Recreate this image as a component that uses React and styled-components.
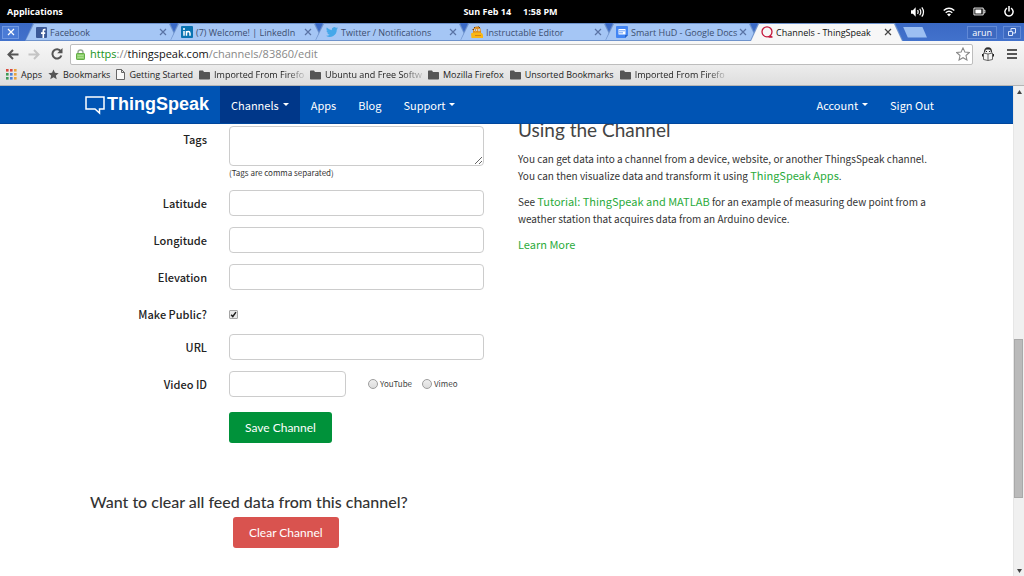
import React, { useState } from "react";
import styled, { createGlobalStyle } from "styled-components";

const Colors = {
    navBlue: "#0054b4",
    navActive: "#003789",
    link: "#2aab3b",
    save: "#00923a",
    danger: "#d9534f",
    strip: "#4272cc",
    tab: "#a5c6f5",
};

const uiFont = `"Open Sans", "Noto Sans", sans-serif`;
const siteFont = `"Noto Sans CJK SC", "Noto Sans", sans-serif`;
const titleFont = `Lato, sans-serif`;

const GlobalStyle = createGlobalStyle`
  * {
    box-sizing: border-box;
  }
  body {
    margin: 0;
    background: #fff;
    font-family: ${siteFont};
    color: #333;
  }
  button, input, textarea {
    font-family: inherit;
    margin: 0;
  }
  svg {
    display: block;
    flex: none;
  }
`;

const Screen = styled.div`
  display: flex;
  flex-direction: column;
  min-height: 100vh;
`;

/* desktop panel */

const Panel = styled.header`
  display: grid;
  grid-template-columns: 1fr auto 1fr;
  align-items: center;
  height: 23px;
  padding: 0 10px 0 7px;
  background: #000;
  color: #fff;
  font-family: ${uiFont};
  font-size: 9px;
  font-weight: 700;
`;

const PanelButton = styled.button`
  justify-self: start;
  padding: 0;
  border: none;
  background: none;
  color: inherit;
  font: inherit;
`;

const Clock = styled.div`
  display: flex;
  gap: 12px;
`;

const Indicators = styled.div`
  display: flex;
  align-items: center;
  justify-self: end;
  gap: 18px;
`;

/* browser */

const TabStrip = styled.div`
  display: flex;
  align-items: center;
  height: 18px;
  padding-right: 3px;
  background: linear-gradient(#3a69c4, ${Colors.strip});
  font-family: ${uiFont};
`;

const CloseWindow = styled.button`
  display: flex;
  align-items: center;
  justify-content: center;
  width: 17px;
  height: 13px;
  margin: 0 6px 0 2px;
  padding: 0;
  border: 1px solid #6f98e2;
  background: #4a7bd6;
  color: #fff;
`;

const Tab = styled.div`
  position: relative;
  z-index: ${props => (props.$active ? 2 : 1)};
  display: flex;
  align-items: center;
  flex: 0 1 153px;
  min-width: 0;
  height: 18px;
  padding: 0 11px;
  color: ${props => (props.$active ? "#111" : "#3c4e70")};
  font-size: 9px;
  & + & {
    margin-left: -8px;
  }
  &::before, &::after {
    content: "";
    position: absolute;
    z-index: -1;
    inset: 0;
    clip-path: polygon(8px 0, calc(100% - 8px) 0, 100% 100%, 0 100%);
    background: #6f93cc;
  }
  &::after {
    inset: 1px 1px ${props => (props.$active ? "0" : "1px")};
    background: ${props => (props.$active ? "#f7f7f7" : Colors.tab)};
  }
`;

const TabTitle = styled.a`
  flex: 1;
  margin-left: 3px;
  color: inherit;
  text-decoration: none;
  white-space: nowrap;
`;

const TabClose = styled.button`
  padding: 0;
  border: none;
  background: none;
  color: ${props => (props.$active ? "#444" : "#5a73a4")};
`;

const NewTab = styled.button`
  width: 24px;
  height: 11px;
  padding: 0;
  border: none;
  background: #9cbff2;
  clip-path: polygon(0 0, 80% 0, 100% 100%, 20% 100%);
`;

const WindowButton = styled.button`
  display: flex;
  align-items: center;
  justify-content: center;
  height: 13px;
  padding: 0 4px;
  border: 1px solid #6189d6;
  background: #3c69c0;
  color: #fff;
  font-size: 9px;
  line-height: 11px;
`;

const WindowButtons = styled.div`
  display: flex;
  gap: 6px;
  margin-left: auto;
`;

const Toolbar = styled.div`
  display: flex;
  align-items: center;
  height: 26px;
  padding-left: 6px;
  background: linear-gradient(#f7f7f7, #ebebeb);
`;

const IconButton = styled.button`
  display: flex;
  align-items: center;
  justify-content: center;
  width: ${props => props.$width || 22}px;
  padding: 0;
  border: none;
  background: none;
`;

const AddressBar = styled.div`
  display: flex;
  align-items: center;
  flex: 1;
  min-width: 0;
  height: 21px;
  margin: 0 3px 0 4px;
  padding: 0 2px 0 5px;
  border: 1px solid #bdbdbd;
  border-radius: 2px;
  background: #fff;
`;

const Address = styled.div`
  flex: 1;
  margin-left: 5px;
  color: #888;
  font-family: ${uiFont};
  font-size: 11px;
  line-height: 18px;
  white-space: nowrap;
`;

const Scheme = styled.span`
  color: #179317;
`;

const Host = styled.span`
  color: #111;
`;

const BookmarkBar = styled.nav`
  display: flex;
  align-items: center;
  gap: 6px;
  height: 19px;
  padding: 0 6px 3px;
  border-bottom: 1px solid #b5b5b5;
  background: linear-gradient(#ebebeb, #dedede);
  font-family: ${uiFont};
  font-size: 9px;
`;

const BookmarkLink = styled.a`
  display: flex;
  align-items: center;
  gap: 4px;
  color: #1c1c1c;
  line-height: 14px;
  text-decoration: none;
  white-space: nowrap;
`;

const BookmarkText = styled.span`
  ${props => props.$faded && "mask-image: linear-gradient(to right, #000 80%, rgba(0, 0, 0, 0.2));"}
`;

/* site */

const Viewport = styled.div`
  display: flex;
  flex: 1;
`;

const Site = styled.div`
  flex: 1;
  min-width: 0;
`;

const NavBar = styled.nav`
  position: relative;
  z-index: 3;
  background: ${Colors.navBlue};
  border-bottom: 1px solid #00469c;
`;

const Container = styled.div`
  max-width: 877px;
  margin: 0 auto;
`;

const NavInner = styled(Container)`
  display: flex;
  padding-left: 17px;
`;

const Brand = styled.a`
  display: flex;
  align-items: center;
  gap: 2px;
  width: 135px;
  color: #fff;
  font-family: "Liberation Sans", Arial, sans-serif;
  font-size: 18px;
  font-weight: 700;
  text-decoration: none;
`;

const NavLink = styled.a`
  display: flex;
  align-items: center;
  gap: 4px;
  height: 37px;
  padding: 0 11px;
  background: ${props => (props.$active ? Colors.navActive : "transparent")};
  color: #fff;
  font-size: 11px;
  text-decoration: none;
`;

const Caret = styled.span`
  border: 3px solid transparent;
  border-top-color: currentColor;
  border-bottom: none;
`;

const NavRight = styled.div`
  display: flex;
  margin-left: auto;
`;

/* the content is scrolled a little way under the nav bar */
const Content = styled(Container)`
  display: grid;
  grid-template-columns: 394px 1fr;
  gap: 34px;
  margin-top: -8px;
  padding: 0 12px 0 22px;
`;

const Form = styled.form`
  padding-top: 10px;
`;

const Row = styled.div`
  display: grid;
  grid-template-columns: 117px 1fr;
  column-gap: 22px;
  align-items: ${props => (props.$top ? "start" : "center")};
  margin-bottom: ${props => props.$space || 11}px;
`;

const RowLabel = styled.label`
  color: #222;
  font-size: 11px;
  font-weight: 500;
  line-height: 26px;
  text-align: right;
`;

const control = `
  display: block;
  width: 100%;
  border: 1px solid #ccc;
  border-radius: 4px;
  background: #fff;
  font-size: 11px;
`;

const TextBox = styled.input`
  ${control}
  height: 26px;
  padding: 0 10px;
`;

const TextArea = styled.textarea`
  ${control}
  height: 40px;
  padding: 5px 10px;
  resize: vertical;
`;

const Hint = styled.p`
  margin: 0;
  font-size: 8px;
  line-height: 13px;
`;

const CheckBox = styled.input`
  display: block;
  width: 9px;
  height: 9px;
  appearance: none;
  border: 1px solid #a5a5a5;
  border-radius: 1px;
  background: #e8e8e8;
  &:checked {
    background: #e8e8e8 url("data:image/svg+xml,%3Csvg xmlns='http://www.w3.org/2000/svg' viewBox='0 0 8 8'%3E%3Cpath d='M1.3 4.2 3.2 6.3 6.8 1.3' fill='none' stroke='%23222' stroke-width='1.7'/%3E%3C/svg%3E") center / 100%;
  }
`;

const VideoControls = styled.div`
  display: grid;
  grid-template-columns: 117px 1fr;
  column-gap: 22px;
  align-items: center;
`;

const RadioGroup = styled.div`
  display: flex;
  gap: 10px;
`;

const RadioLabel = styled.label`
  display: flex;
  align-items: center;
  gap: 2px;
  color: #444;
  font-size: 8px;
  line-height: 14px;
`;

const Radio = styled.input`
  width: 10px;
  height: 10px;
  appearance: none;
  border: 1px solid #9d9d9d;
  border-radius: 50%;
  background: linear-gradient(#eee, #dcdcdc);
  &:checked {
    background: radial-gradient(#444 35%, #e4e4e4 40%);
  }
`;

const ActionButton = styled.button`
  display: block;
  height: 31px;
  margin-left: ${props => props.$indent}px;
  padding: 0 16px;
  border: none;
  border-radius: 3px;
  background: ${props => props.$color};
  color: #fff;
  font-family: ${titleFont};
  font-size: 12px;
  cursor: pointer;
`;

const ClearTitle = styled.h3`
  margin: 47px 0 3px;
  font-family: ${titleFont};
  font-size: 16px;
  font-weight: 500;
  line-height: 24px;
  white-space: nowrap;
`;

const HelpTitle = styled.h2`
  margin: 0 0 6px;
  color: #444;
  font-family: ${titleFont};
  font-size: 19px;
  font-weight: 400;
  line-height: 28px;
`;

const HelpText = styled.p`
  margin: 0 0 9px;
  font-size: 10px;
  line-height: 17px;
`;

const HelpLink = styled.a`
  color: ${Colors.link};
  font-size: 11px;
  text-decoration: none;
`;

const ScrollTrack = styled.div`
  display: flex;
  flex-direction: column;
  align-items: center;
  width: 11px;
  padding: 4px 0 3px;
  border-left: 1px solid #e6e6e6;
  background: #f0f0f0;
`;

const ScrollThumb = styled.div`
  flex: 157;
  align-self: stretch;
  margin-right: 1px;
  border: 1px solid #a9a9a9;
  background: #bababa;
`;

const ScrollSpace = styled.div`
  flex: ${props => props.$size};
`;

function CloseIcon() {
    return (
        <svg width="8" height="8" viewBox="0 0 8 8" stroke="currentColor" strokeWidth="1.2">
            <path d="M1 1l6 6M7 1L1 7" />
        </svg>
    );
}

function FolderIcon() {
    return (
        <svg width="11" height="10" viewBox="0 0 11 10" fill="#555">
            <path d="M0 1.2Q0 .5.7.5H4l1 1.5h5.3q.7 0 .7.7v6q0 .8-.7.8H.7Q0 9.5 0 8.7z" />
        </svg>
    );
}

function AppsIcon() {
    const colors = ["#d9483b", "#d9483b", "#e8a33d", "#3f9b57", "#4a7fd6", "#e8a33d", "#3f9b57", "#4a7fd6", "#e8a33d"];
    return (
        <svg width="11" height="11" viewBox="0 0 11 11">
            {colors.map((color, i) => (
                <rect key={i} x={(i % 3) * 4} y={Math.floor(i / 3) * 4} width="2.6" height="2.6" fill={color} />
            ))}
        </svg>
    );
}

function StarIcon() {
    return (
        <svg width="11" height="11" viewBox="0 0 24 24" fill="#555">
            <path d="M12 1l3.2 7.4 8.1.7-6.1 5.3 1.8 7.9-7-4.2-7 4.2 1.8-7.9L.7 9.1l8.1-.7z" />
        </svg>
    );
}

function PageIcon() {
    return (
        <svg width="9" height="11" viewBox="0 0 9 11" fill="#f8f8f8" stroke="#666">
            <path d="M.5.5h5l3 3v7h-8zM5.5.5v3h3" />
        </svg>
    );
}

function FacebookIcon() {
    return (
        <svg width="11" height="11" viewBox="0 0 11 11">
            <rect width="11" height="11" rx="1" fill="#3b5998" />
            <path d="M9.5 2.6H8.4q-1.1 0-1.1 1.2V11M5 6.1h4.2" fill="none" stroke="#fff" strokeWidth="1.6" />
        </svg>
    );
}

function LinkedInIcon() {
    return (
        <svg width="12" height="12" viewBox="0 0 12 12">
            <rect width="12" height="12" rx="1" fill="#0a74b2" />
            <path d="M3 5v4.8M5.5 5v4.8M5.5 7.3q0-1.7 1.7-1.7T9 7.3v2.5" fill="none" stroke="#fff" strokeWidth="1.5" />
            <circle cx="3" cy="3" r="1" fill="#fff" />
        </svg>
    );
}

function TwitterIcon() {
    return (
        <svg width="12" height="12" viewBox="0 0 24 24" fill="#45a8ea">
            <path d="M24 4.6a10 10 0 0 1-2.8.8 5 5 0 0 0 2.1-2.7 10 10 0 0 1-3.1 1.2 4.9 4.9 0 0 0-8.4 4.5A14 14 0 0 1 1.7 3.2a4.9 4.9 0 0 0 1.5 6.5 5 5 0 0 1-2.2-.6 4.9 4.9 0 0 0 3.9 4.9 5 5 0 0 1-2.2.1 4.9 4.9 0 0 0 4.6 3.4A9.9 9.9 0 0 1 0 19.500a14 14 0 0 0 21.500-12.400A10 10 0 0 0 24 4.600z" />
        </svg>
    );
}

function RobotIcon() {
    return (
        <svg width="12" height="12" viewBox="0 0 12 12">
            <path d="M2 5Q2 .5 6 .5T10 5v2H2z" fill="#d98a1d" />
            <path d="M3 1l1 1M7.5.5L9 2M1.5 3.5h2" stroke="#6b3b12" />
            <path d="M0 7.5Q2 6 4 6.5h5q3 .5 3 3V12H.5z" fill="#f9b714" />
            <circle cx="4.5" cy="4" r="1.3" fill="#fff" />
            <circle cx="8" cy="4" r="1.3" fill="#fff" />
            <path d="M4 4h1M7.5 4h1" stroke="#333" />
            <path d="M4.5 9.5h1M6.5 9.5h1M8.5 9.5h1" stroke="#b4481b" />
        </svg>
    );
}

function DocsIcon() {
    return (
        <svg width="12" height="12" viewBox="0 0 12 12">
            <path d="M1 0h10q1 0 1 1v8l-3 3H1q-1 0-1-1V1q0-1 1-1z" fill="#4285f4" />
            <path d="M2.5 3h7v5.5h-7z" fill="#fff" />
            <path d="M3 4.8h6M3 6.8h4" stroke="#4285f4" strokeWidth=".8" />
            <path d="M9 12V9h3z" fill="#2a62c4" />
        </svg>
    );
}

function ThingSpeakIcon() {
    return (
        <svg width="12" height="12" viewBox="0 0 12 12" fill="none" stroke="#c4173c" strokeWidth="1.3">
            <circle cx="6" cy="5.8" r="5" />
            <path d="M7.5 11h4M9 9.5l2 1.8" />
        </svg>
    );
}

function PanelIcons() {
    return (
        <Indicators>
            <svg width="14" height="12" viewBox="0 0 15 12" fill="none" stroke="#fff" strokeWidth="1.3">
                <path d="M0 4h2l3-3v10L2 8H0z" fill="#fff" stroke="none" />
                <path d="M7 4q1.3 2 0 4M9.3 2.5q2.4 3.5 0 7M11.6 1q3.6 5 0 10" />
            </svg>
            <svg width="12" height="10" viewBox="0 0 12 10" fill="none" stroke="#fff" strokeWidth="1.4">
                <path d="M.7 3.5q5.3-4.5 10.6 0M2.7 5.7q3.3-2.8 6.6 0" />
                <path d="M4 7.3q2-1.4 4 0L6 9.5z" fill="#fff" stroke="none" />
            </svg>
            <svg width="13" height="9" viewBox="0 0 14 9" fill="none" stroke="#fff">
                <path d="M1 .8h10v7.4H1zM11.5 3h1.3v3h-1.3" />
                <path d="M2.5 2.3h6.5v4.4H2.5z" fill="#fff" stroke="none" />
            </svg>
            <svg width="10" height="11" viewBox="0 0 10 11" fill="none" stroke="#fff" strokeWidth="1.5">
                <path d="M3 2.2a4.1 4.1 0 1 0 4 0M5 0v5.5" />
            </svg>
        </Indicators>
    );
}

function BackIcon() {
    return (
        <svg width="12" height="11" viewBox="0 0 12 11" fill="none" stroke="#555" strokeWidth="2">
            <path d="M11.5 5.5H2M6 1L1.5 5.5 6 10" />
        </svg>
    );
}

function ForwardIcon() {
    return (
        <svg width="12" height="11" viewBox="0 0 12 11" fill="none" stroke="#c4c4c4" strokeWidth="2">
            <path d="M.5 5.5H10M6 1l4.5 4.5L6 10" />
        </svg>
    );
}

function ReloadIcon() {
    return (
        <svg width="12" height="12" viewBox="0 0 12 12">
            <path d="M9.8 3.2A4.6 4.6 0 1 0 10.4 7.5" fill="none" stroke="#555" strokeWidth="2" />
            <path d="M11.5 0v5.3H6.2z" fill="#555" />
        </svg>
    );
}

function LockIcon() {
    return (
        <svg width="9" height="11" viewBox="0 0 9 11">
            <path d="M2 5V3.3Q2 1 4.5 1T7 3.3V5" fill="none" stroke="#9aa89a" strokeWidth="1.4" />
            <rect x=".5" y="4.5" width="8" height="6" rx=".6" fill="#8ccf6b" stroke="#63ad46" />
            <path d="M1.5 6.5h6M1.5 8.5h6" stroke="#b6e59d" strokeWidth=".7" />
        </svg>
    );
}

const tabs = [
    { title: "Facebook", icon: <FacebookIcon /> },
    { title: "(7) Welcome! | LinkedIn", icon: <LinkedInIcon /> },
    { title: "Twitter / Notifications", icon: <TwitterIcon /> },
    { title: "Instructable Editor", icon: <RobotIcon /> },
    { title: "Smart HuD - Google Docs", icon: <DocsIcon /> },
    { title: "Channels - ThingSpeak", icon: <ThingSpeakIcon />, active: true },
];

const bookmarks = [
    { text: "Apps", icon: <AppsIcon /> },
    { text: "Bookmarks", icon: <StarIcon /> },
    { text: "Getting Started", icon: <PageIcon /> },
    { text: "Imported From Firefo", icon: <FolderIcon />, faded: true },
    { text: "Ubuntu and Free Softw", icon: <FolderIcon />, faded: true },
    { text: "Mozilla Firefox", icon: <FolderIcon /> },
    { text: "Unsorted Bookmarks", icon: <FolderIcon /> },
    { text: "Imported From Firefo", icon: <FolderIcon />, faded: true },
];

function Browser() {
    return (
        <div>
            <TabStrip>
                <CloseWindow aria-label="Close window"><CloseIcon /></CloseWindow>
                {tabs.map((tab) => (
                    <Tab key={tab.title} $active={tab.active}>
                        {tab.icon}
                        <TabTitle href="#">{tab.title}</TabTitle>
                        <TabClose aria-label="Close tab" $active={tab.active}><CloseIcon /></TabClose>
                    </Tab>
                ))}
                <NewTab aria-label="New tab" />
                <WindowButtons>
                    <WindowButton>arun</WindowButton>
                    <WindowButton aria-label="Restore">
                        <svg width="8" height="8" viewBox="0 0 8 8" fill="none" stroke="#dbe6fb">
                            <path d="M.5 3.5h4v4h-4zM3 3V.5h4.5v4.5H5" />
                        </svg>
                    </WindowButton>
                </WindowButtons>
            </TabStrip>
            <Toolbar>
                <IconButton aria-label="Back" $width={14}><BackIcon /></IconButton>
                <IconButton aria-label="Forward" $width={28}><ForwardIcon /></IconButton>
                <IconButton aria-label="Reload" $width={18}><ReloadIcon /></IconButton>
                <AddressBar>
                    <LockIcon />
                    <Address>
                        <Scheme>https</Scheme>://<Host>thingspeak.com</Host>/channels/83860/edit
                    </Address>
                    <svg width="14" height="14" viewBox="0 0 24 24" fill="none" stroke="#888" strokeWidth="1.8">
                        <path d="M12 1.5l3.2 7.2 7.8.7-5.9 5.2 1.7 7.7-6.8-4-6.8 4 1.7-7.7L1 9.4l7.8-.7z" />
                    </svg>
                </AddressBar>
                <IconButton aria-label="Extension" $width={24}>
                    <svg width="12" height="14" viewBox="0 0 12 14">
                        <path d="M2.5 5.5Q2.5 1 6 1t3.5 4.5" fill="none" stroke="#333" strokeWidth="1.3" />
                        <path d="M3.500 2.500Q6-.5 8.500 2.500z" fill="#222" />
                        <path d="M1.5 6L6 7l4.5-1v6.500L6 13.500l-4.500-1z" fill="#f4f4f4" stroke="#555" strokeWidth=".9" />
                        <path d="M6 7v6.500" stroke="#555" strokeWidth=".9" />
                        <path d="M.6 7v2.500M11.400 7v2.500M4 4.500h1M7 4.500h1" stroke="#222" strokeWidth="1.2" />
                    </svg>
                </IconButton>
                <IconButton aria-label="Menu" $width={24}>
                    <svg width="10" height="10" viewBox="0 0 10 10" stroke="#555" strokeWidth="2">
                        <path d="M0 1h10M0 5h10M0 9h10" />
                    </svg>
                </IconButton>
            </Toolbar>
            <BookmarkBar>
                {bookmarks.map((item, i) => (
                    <BookmarkLink key={i} href="#">
                        {item.icon}
                        <BookmarkText $faded={item.faded}>{item.text}</BookmarkText>
                    </BookmarkLink>
                ))}
            </BookmarkBar>
        </div>
    );
}

function ChannelForm() {
    const [isPublic, setIsPublic] = useState(true);
    const [video, setVideo] = useState("");

    return (
        <Form onSubmit={(e) => e.preventDefault()}>
            <Row $top>
                <RowLabel htmlFor="tags">Tags</RowLabel>
                <div>
                    <TextArea id="tags" />
                    <Hint>(Tags are comma separated)</Hint>
                </div>
            </Row>
            <Row>
                <RowLabel htmlFor="latitude">Latitude</RowLabel>
                <TextBox id="latitude" />
            </Row>
            <Row>
                <RowLabel htmlFor="longitude">Longitude</RowLabel>
                <TextBox id="longitude" />
            </Row>
            <Row>
                <RowLabel htmlFor="elevation">Elevation</RowLabel>
                <TextBox id="elevation" />
            </Row>
            <Row $space={7}>
                <RowLabel htmlFor="public">Make Public?</RowLabel>
                <CheckBox id="public" type="checkbox" checked={isPublic} onChange={() => setIsPublic(!isPublic)} />
            </Row>
            <Row>
                <RowLabel htmlFor="url">URL</RowLabel>
                <TextBox id="url" />
            </Row>
            <Row $space={15}>
                <RowLabel htmlFor="video">Video ID</RowLabel>
                <VideoControls>
                    <TextBox id="video" />
                    <RadioGroup>
                        {["YouTube", "Vimeo"].map((site) => (
                            <RadioLabel key={site}>
                                <Radio type="radio" name="site" checked={video === site} onChange={() => setVideo(site)} />
                                {site}
                            </RadioLabel>
                        ))}
                    </RadioGroup>
                </VideoControls>
            </Row>
            <ActionButton $color={Colors.save} $indent={139}>Save Channel</ActionButton>
            <ClearTitle>Want to clear all feed data from this channel?</ClearTitle>
            <ActionButton type="button" $color={Colors.danger} $indent={143}>Clear Channel</ActionButton>
        </Form>
    );
}

function App() {
    return (
        <Screen>
            <GlobalStyle />
            <Panel>
                <PanelButton>Applications</PanelButton>
                <Clock><span>Sun Feb 14</span><span>1:58 PM</span></Clock>
                <PanelIcons />
            </Panel>
            <Browser />
            <Viewport>
                <Site>
                    <NavBar>
                        <NavInner>
                            <Brand href="#">
                                <svg width="20" height="20" viewBox="0 0 20 20" fill="none" stroke="#fff" strokeWidth="1.5">
                                    <path d="M1 2h18v12h-4.5v4l-4.5-4H1z" />
                                </svg>
                                ThingSpeak
                            </Brand>
                            <NavLink href="#" $active>Channels <Caret /></NavLink>
                            <NavLink href="#">Apps</NavLink>
                            <NavLink href="#">Blog</NavLink>
                            <NavLink href="#">Support <Caret /></NavLink>
                            <NavRight>
                                <NavLink href="#">Account <Caret /></NavLink>
                                <NavLink href="#">Sign Out</NavLink>
                            </NavRight>
                        </NavInner>
                    </NavBar>
                    <Content>
                        <ChannelForm />
                        <aside>
                            <HelpTitle>Using the Channel</HelpTitle>
                            <HelpText>
                                You can get data into a channel from a device, website, or another ThingsSpeak channel.
                                You can then visualize data and transform it using <HelpLink href="#">ThingSpeak Apps</HelpLink>.
                            </HelpText>
                            <HelpText>
                                See <HelpLink href="#">Tutorial: ThingSpeak and MATLAB</HelpLink> for an example of measuring
                                dew point from a weather station that acquires data from an Arduino device.
                            </HelpText>
                            <HelpText>
                                <HelpLink href="#">Learn More</HelpLink>
                            </HelpText>
                        </aside>
                    </Content>
                </Site>
                <ScrollTrack aria-hidden="true">
                    <svg width="5" height="4" viewBox="0 0 5 4" fill="#444"><path d="M0 4L2.5 0 5 4z" /></svg>
                    <ScrollSpace $size={246} />
                    <ScrollThumb />
                    <ScrollSpace $size={71} />
                    <svg width="5" height="4" viewBox="0 0 5 4" fill="#444"><path d="M0 0l2.5 4L5 0z" /></svg>
                </ScrollTrack>
            </Viewport>
        </Screen>
    );
}

export default App;
